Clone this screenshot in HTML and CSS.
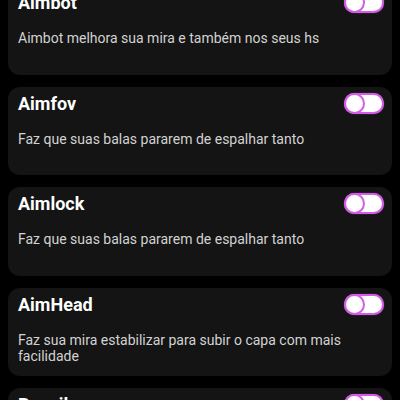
FILE: index.html
```html
<!doctype html>
<html>
<head>
    <meta charset="utf-8">
    <title>Funções</title>
    <link rel="stylesheet" href="styles.css">
</head>
<body>
    <ul class="lista">
        <li class="card">
            <div class="topo">
                <span class="titulo">Aimbot</span>
                <label class="switch"><input type="checkbox"><span class="bola"></span></label>
            </div>
            <p class="desc">Aimbot melhora sua mira e também nos seus hs</p>
        </li>
        <li class="card">
            <div class="topo">
                <span class="titulo">Aimfov</span>
                <label class="switch"><input type="checkbox"><span class="bola"></span></label>
            </div>
            <p class="desc">Faz que suas balas pararem de espalhar tanto</p>
        </li>
        <li class="card">
            <div class="topo">
                <span class="titulo">Aimlock</span>
                <label class="switch"><input type="checkbox"><span class="bola"></span></label>
            </div>
            <p class="desc">Faz que suas balas pararem de espalhar tanto</p>
        </li>
        <li class="card">
            <div class="topo">
                <span class="titulo">AimHead</span>
                <label class="switch"><input type="checkbox"><span class="bola"></span></label>
            </div>
            <p class="desc">Faz sua mira estabilizar para subir o capa com mais facilidade</p>
        </li>
        <li class="card">
            <div class="topo">
                <span class="titulo">Recoil</span>
                <label class="switch"><input type="checkbox"><span class="bola"></span></label>
            </div>
            <p class="desc">Diminui o recuo da sua arma</p>
        </li>
    </ul>
</body>
</html>
```

FILE: styles.css
```css
html, body {
    margin: 0;
    padding: 0;
    background: #000;
    font-family: Roboto, "Noto Sans", sans-serif;
}

.lista {
    list-style: none;
    margin: -14px 0 0 0;
    padding: 0 8px;
    display: flex;
    flex-direction: column;
    gap: 12px;
}

.card {
    background: #141414;
    border-radius: 12px;
    height: 88.5px;
    box-sizing: border-box;
    padding: 6px 8px 0 10px;
}

.topo {
    display: flex;
    align-items: center;
    justify-content: space-between;
    height: 22px;
}

.titulo {
    color: #fff;
    font-size: 18px;
    font-weight: bold;
    line-height: 22px;
}

.desc {
    margin: 16px 0 0 0;
    color: #d2d2d2;
    font-size: 14px;
    line-height: 16px;
}

.switch {
    position: relative;
    display: block;
    width: 40px;
    height: 21px;
    margin-top: -1px;
    box-sizing: border-box;
    background: #fff;
    border: 2px solid #d45ce6;
    border-radius: 11px;
    box-shadow: 0 0 1px #d45ce6;
}

.switch input {
    display: none;
}

.bola {
    position: absolute;
    left: -2px;
    top: -2px;
    width: 21px;
    height: 21px;
    box-sizing: border-box;
    border-radius: 50%;
    background: #fff;
    border: 2px solid #d45ce6;
}
```
